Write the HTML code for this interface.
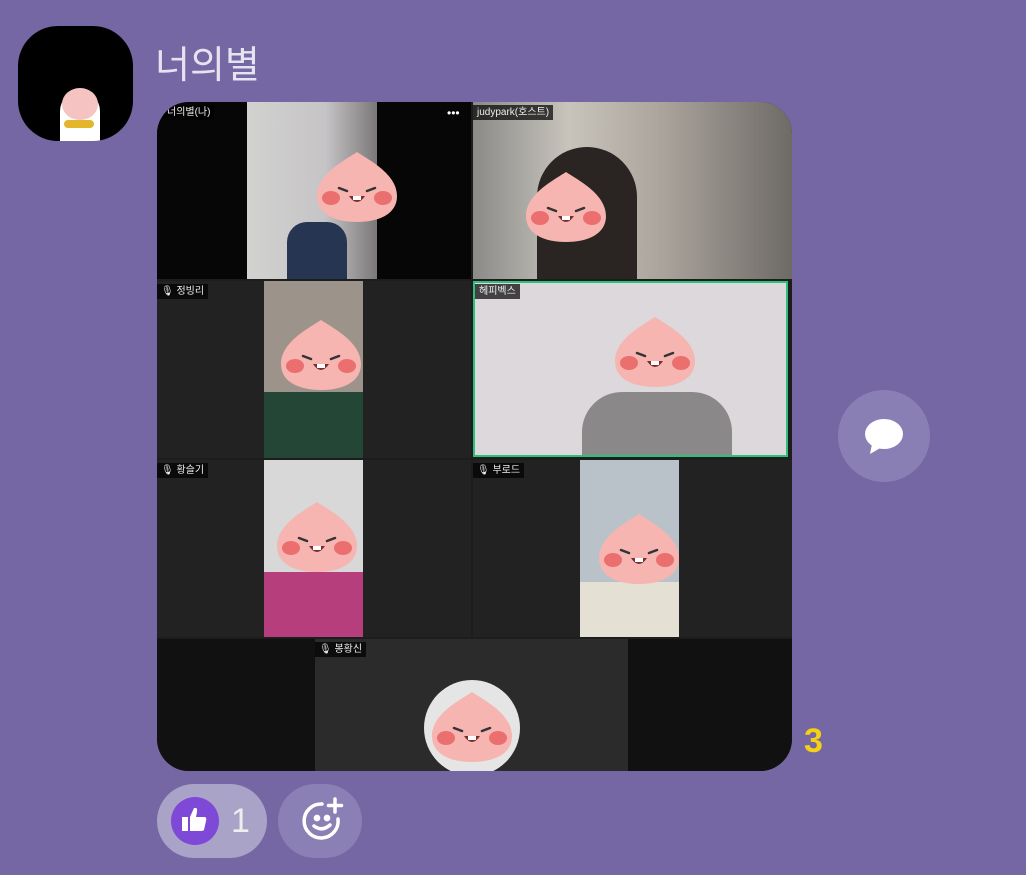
<!DOCTYPE html>
<html><head><meta charset="utf-8"><style>
body{margin:0;width:1026px;height:875px;background:#7467a3;position:relative;overflow:hidden;font-family:"Liberation Sans","Noto Sans CJK KR",sans-serif}
.abs{position:absolute}
.lbl{position:absolute;background:rgba(0,0,0,.7);color:#eee;font-size:10px;padding:1px 4px;line-height:13px}
</style></head><body>
<svg width="0" height="0" style="position:absolute"><defs>
<g id="pc">
<path d="M40 0 C52 8 80 22 80 44 C80 62 62 70 40 70 C18 70 0 62 0 44 C0 22 28 8 40 0Z" fill="#f6b5b0"/>
<ellipse cx="14" cy="46" rx="9" ry="7" fill="#ec6f6f"/><ellipse cx="66" cy="46" rx="9" ry="7" fill="#ec6f6f"/>
<path d="M22 36 l8 3 M58 36 l-8 3" stroke="#333" stroke-width="2.5" stroke-linecap="round"/>
<path d="M32 44 Q40 56 48 44Z" fill="#7a2d2d"/><rect x="36" y="44" width="8" height="4" fill="#fff"/>
</g></defs></svg>

<div class="abs" style="left:18px;top:26px;width:115px;height:115px;border-radius:40px;background:#000;overflow:hidden">
<div class="abs" style="left:42px;top:65px;width:40px;height:50px;background:#fff;border-radius:20px 20px 0 0"></div>
<div class="abs" style="left:44px;top:62px;width:36px;height:32px;background:#f6c3c3;border-radius:50%"></div>
<div class="abs" style="left:46px;top:94px;width:30px;height:8px;background:#e3b62c;border-radius:4px"></div>
</div>
<div class="abs" style="left:155px;top:34px;font-size:38px;color:#e6e3f0">너의별</div>

<div class="abs" style="left:157px;top:102px;width:635px;height:669px;border-radius:32px;overflow:hidden;background:#1d1d1d">
 <div class="abs" style="left:0;top:0;width:314px;height:177px;background:#060606"></div>
 <div class="abs" style="left:90px;top:0;width:130px;height:177px;background:linear-gradient(90deg,#d2d2d0,#c6c4c6 60%,#7a7878)"></div>
 <div class="abs" style="left:130px;top:120px;width:60px;height:57px;background:#263552;border-radius:20px 20px 0 0"></div>
 <div class="abs" style="left:316px;top:0;width:319px;height:177px;background:linear-gradient(90deg,#8a8a88,#c8c4bc 30%,#a9a39b 60%,#6e6a66)"></div>
 <div class="abs" style="left:380px;top:45px;width:100px;height:132px;background:#2a2522;border-radius:50px 50px 0 0"></div>
 <div class="abs" style="left:0;top:179px;width:314px;height:177px;background:#222"></div>
 <div class="abs" style="left:107px;top:179px;width:99px;height:177px;background:#9c938a"></div>
 <div class="abs" style="left:107px;top:290px;width:99px;height:66px;background:#234636"></div>
 <div class="abs" style="left:316px;top:179px;width:315px;height:176px;background:#dcd8dc;border:2px solid #2cc07a;box-sizing:border-box"></div>
 <div class="abs" style="left:425px;top:290px;width:150px;height:63px;background:#8b8889;border-radius:40px 40px 0 0"></div>
 <div class="abs" style="left:0;top:358px;width:314px;height:177px;background:#222"></div>
 <div class="abs" style="left:107px;top:358px;width:99px;height:177px;background:#d8d8d8"></div>
 <div class="abs" style="left:107px;top:470px;width:99px;height:65px;background:#b63e7c"></div>
 <div class="abs" style="left:316px;top:358px;width:319px;height:177px;background:#222"></div>
 <div class="abs" style="left:423px;top:358px;width:99px;height:177px;background:#b9c2c8"></div>
 <div class="abs" style="left:423px;top:480px;width:99px;height:55px;background:#e4e0d4"></div>
 <div class="abs" style="left:0;top:537px;width:635px;height:132px;background:#111"></div>
 <div class="abs" style="left:158px;top:537px;width:313px;height:132px;background:#2b2b2b"></div>
 <div class="abs" style="left:267px;top:578px;width:96px;height:96px;border-radius:50%;background:#e5e5e5"></div>

 <svg class="abs" style="left:0;top:0" width="635" height="669">
  <use href="#pc" x="160" y="50"/>
  <use href="#pc" x="369" y="70"/>
  <use href="#pc" x="124" y="218"/>
  <use href="#pc" x="458" y="215"/>
  <use href="#pc" x="120" y="400"/>
  <use href="#pc" x="442" y="412"/>
  <use href="#pc" x="275" y="590"/>
 </svg>
 <div class="lbl" style="left:6px;top:3px">너의별(나)</div>
 <div class="abs" style="left:290px;top:4px;color:#fff;font-size:12px">•••</div>
 <div class="lbl" style="left:316px;top:3px">judypark(호스트)</div>
 <div class="lbl" style="left:0;top:182px">🎙 정빙리</div>
 <div class="lbl" style="left:318px;top:182px">헤피벡스</div>
 <div class="lbl" style="left:0;top:361px">🎙 황슬기</div>
 <div class="lbl" style="left:316px;top:361px">🎙 부로드</div>
 <div class="lbl" style="left:158px;top:540px">🎙 봉황신</div>
</div>
<div class="abs" style="left:804px;top:722px;font-size:34px;font-weight:bold;color:#f5d116">3</div>

<div class="abs" style="left:838px;top:390px;width:92px;height:92px;border-radius:50%;background:#8a7fb4"></div>
<svg class="abs" style="left:862px;top:416px" width="44" height="40"><ellipse cx="22" cy="18" rx="19" ry="15" fill="#fff"/><path d="M10 28 L8 38 L20 31Z" fill="#fff"/></svg>

<div class="abs" style="left:157px;top:784px;width:110px;height:74px;border-radius:37px;background:#aaa3c8"></div>
<div class="abs" style="left:171px;top:797px;width:48px;height:48px;border-radius:50%;background:#7d49d6"></div>
<svg class="abs" style="left:180px;top:805px" width="30" height="30"><rect x="2" y="12" width="6" height="14" fill="#fff"/><path d="M10 12 L14 3 Q18 2 17 7 L16 12 L25 12 Q27 13 26 16 L24 25 Q23 26 21 26 L10 26Z" fill="#fff"/></svg>
<div class="abs" style="left:231px;top:802px;font-size:34px;color:#eee">1</div>
<div class="abs" style="left:278px;top:784px;width:84px;height:74px;border-radius:37px;background:#8a80b5"></div>
<svg class="abs" style="left:295px;top:795px" width="52" height="52" fill="none" stroke="#fff" stroke-width="3.5" stroke-linecap="round">
<path d="M27 9 A17 17 0 1 0 43 24"/><path d="M40 4 v13 M33.5 10.5 h13"/><circle cx="22" cy="23" r="1.6" fill="#fff"/><circle cx="32" cy="23" r="1.6" fill="#fff"/><path d="M19 31 Q27 37 35 30"/></svg>
</body></html>
